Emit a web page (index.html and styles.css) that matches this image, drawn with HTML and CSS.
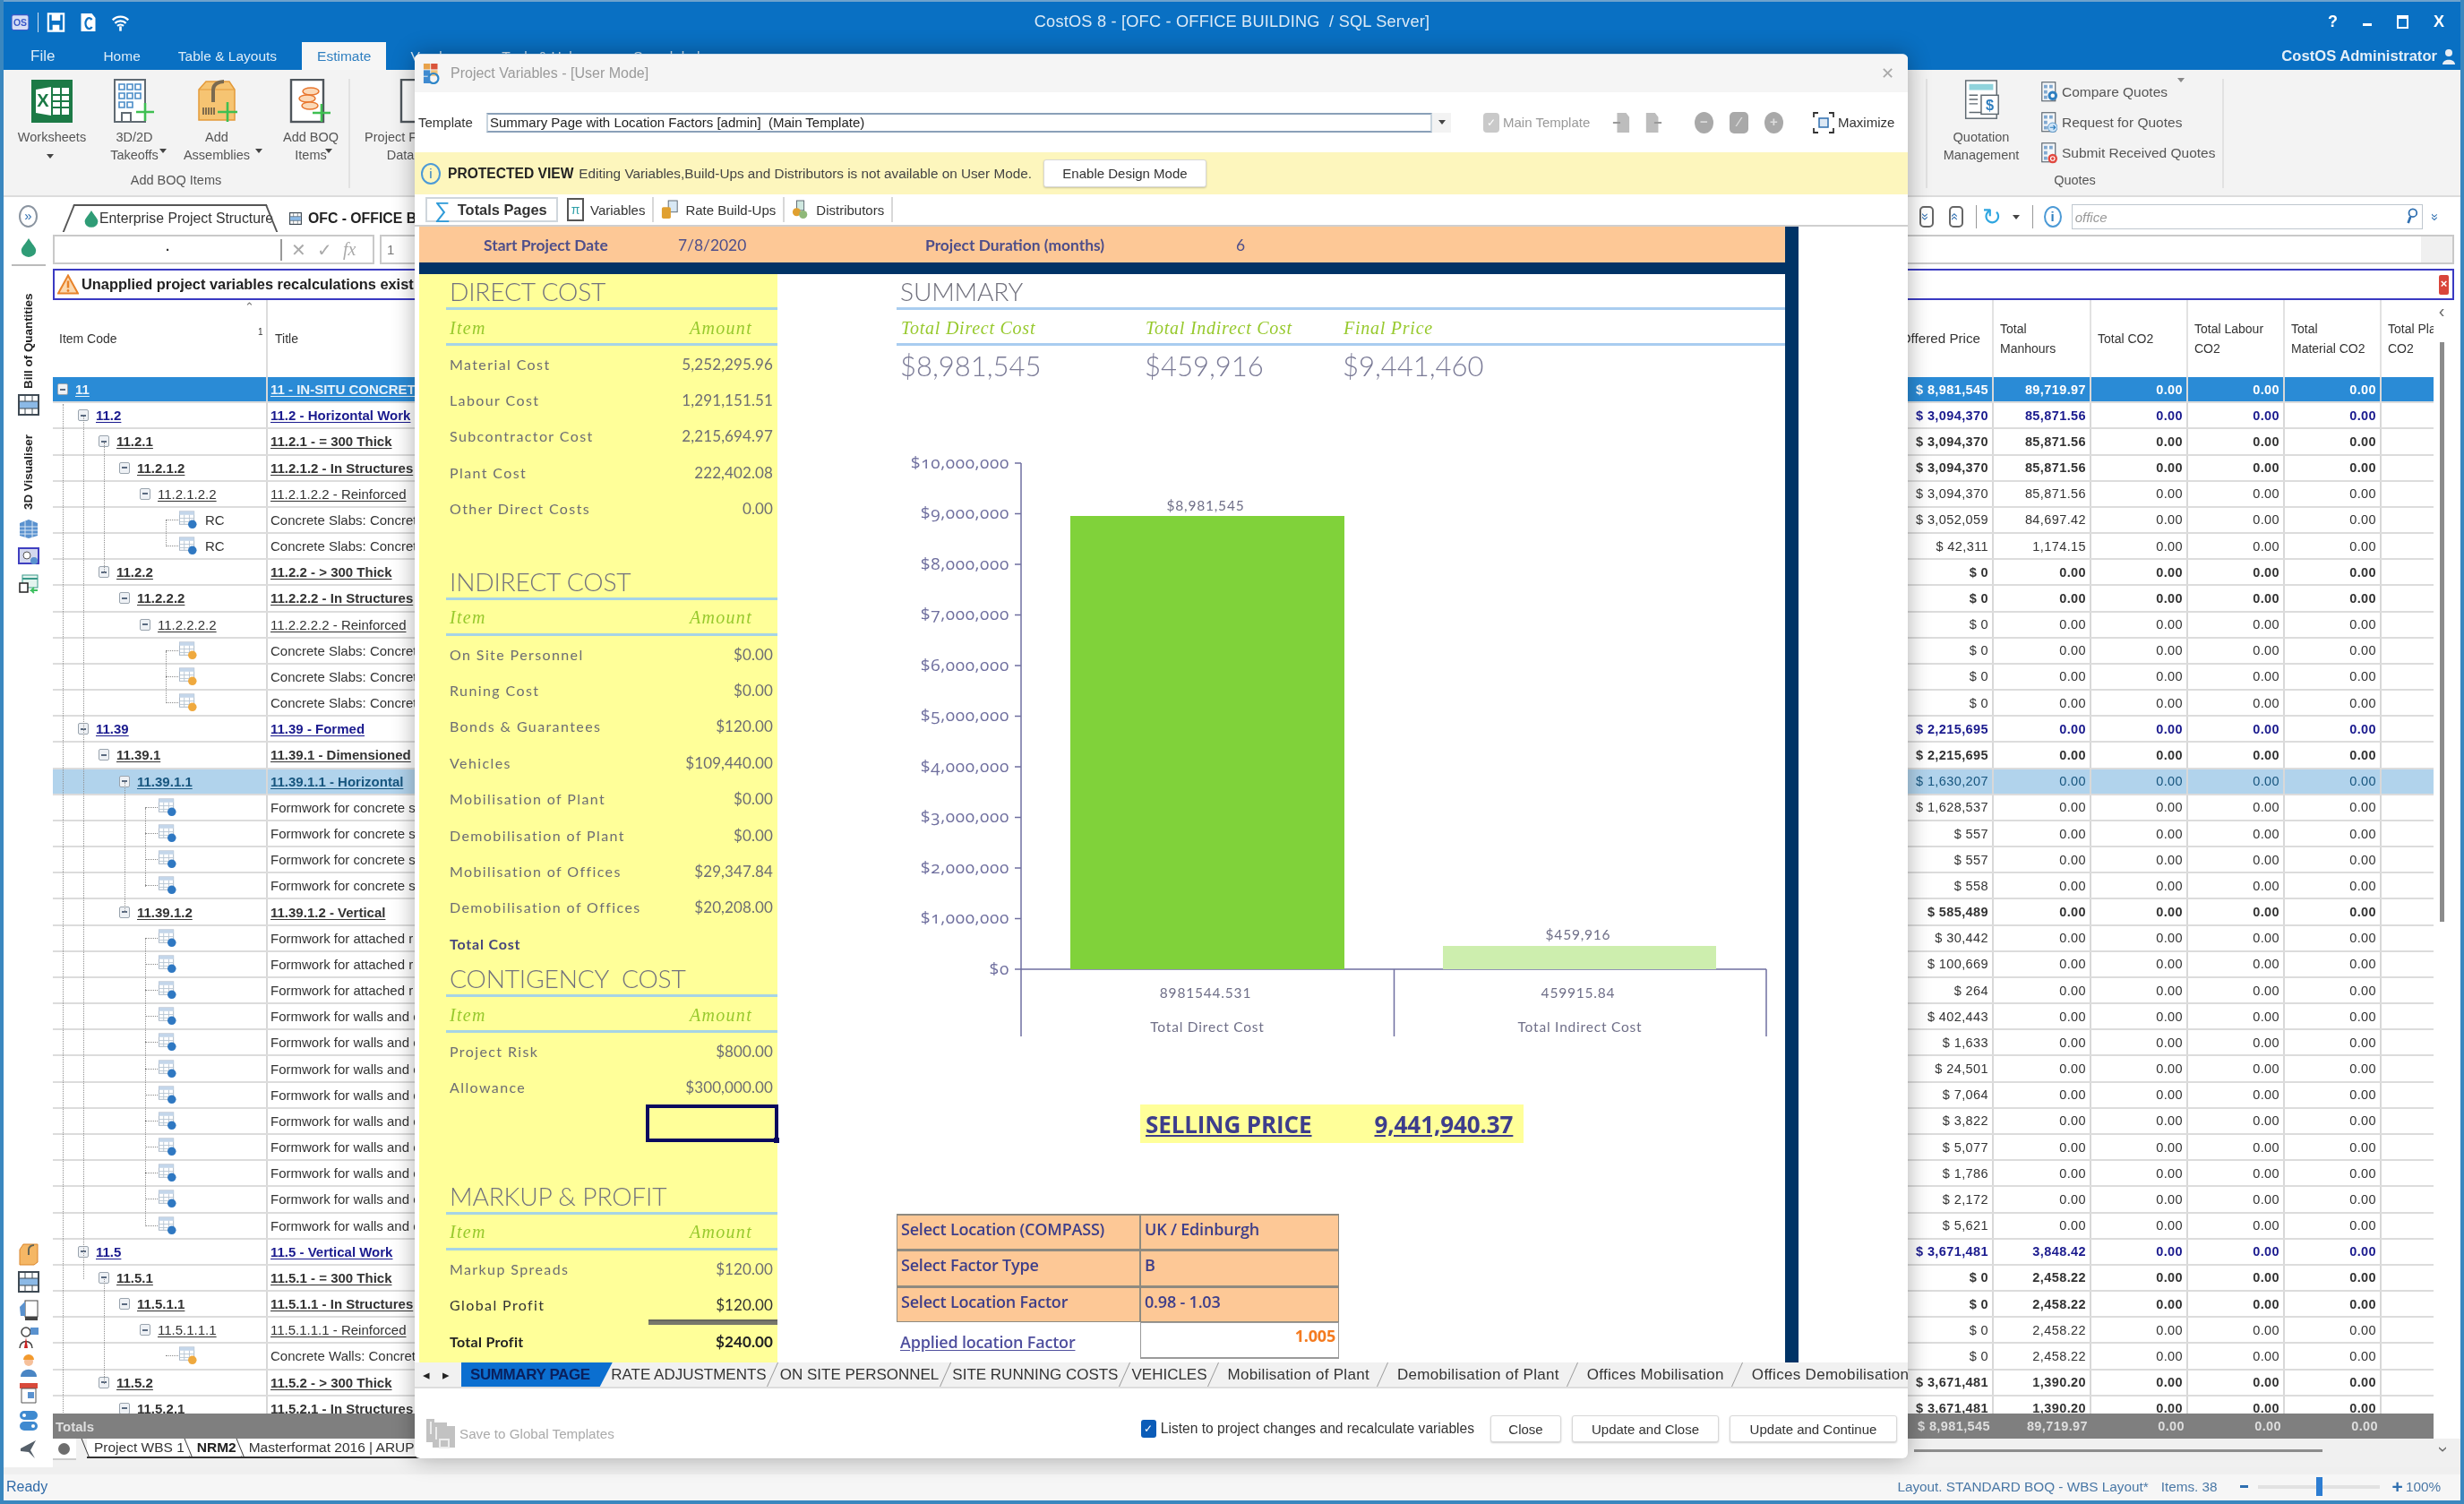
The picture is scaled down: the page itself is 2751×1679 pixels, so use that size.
FILE: index.html
```html
<!DOCTYPE html>
<html lang="en">
<head>
<meta charset="utf-8">
<title>CostOS 8 - Project Variables</title>
<link rel="stylesheet" href="styles.css">
</head>
<body>
<svg class="defs" width="0" height="0">
  <symbol id="lb" viewBox="0 0 22 22"><rect x="1" y="1" width="17" height="15" fill="#fff" stroke="#a8b6c6"/><rect x="1" y="1" width="17" height="4" fill="#c4d6ea"/><path d="M1 9h17M1 13h17M6.5 5v11M12.5 5v11" stroke="#b8c6d4"/><circle cx="16" cy="16" r="5" fill="#2f78c2"/></symbol>
  <symbol id="lo" viewBox="0 0 22 22"><rect x="1" y="1" width="17" height="15" fill="#fff" stroke="#a8b6c6"/><rect x="1" y="1" width="17" height="4" fill="#c4d6ea"/><path d="M1 9h17M1 13h17M6.5 5v11M12.5 5v11" stroke="#b8c6d4"/><circle cx="16" cy="16" r="5" fill="#efa93e"/></symbol>
  <symbol id="table" viewBox="0 0 24 24"><rect x="1" y="1" width="22" height="22" fill="#fff" stroke="#3f4a54" stroke-width="2"/><rect x="2" y="8" width="20" height="8" fill="#8bb9e6"/><path d="M2 8h20M2 16h20M8 2v6M16 2v6M8 16v6M16 16v6" stroke="#3f4a54"/></symbol>
  <symbol id="qdoc" viewBox="0 0 24 32"><rect x="1" y="1" width="20" height="28" fill="#f4f6f8" stroke="#56616b" stroke-width="1.5"/><rect x="4" y="5" width="5" height="5" fill="#7fa8d0"/><rect x="12" y="5" width="5" height="5" fill="#7fa8d0"/><rect x="4" y="13" width="5" height="5" fill="#7fa8d0"/><rect x="4" y="21" width="5" height="5" fill="#7fa8d0"/></symbol>
</svg>

<div class="app">
  <header class="titlebar">
    <div class="qat">
      <svg class="qi" viewBox="0 0 20 20"><rect x="1" y="2" width="18" height="16" rx="2" fill="#d6def5" stroke="#3a58c9"/><text x="10" y="14" class="qi-t">OS</text></svg>
      <span class="qsep"></span>
      <svg class="qi qi-w" viewBox="0 0 22 24"><path d="M2 2h18v20H2z" fill="none" stroke="#fff" stroke-width="2.4"/><path d="M6 2h10v8H6zM7 15h8v7H7z" fill="#fff"/></svg>
      <svg class="qi" viewBox="0 0 20 24"><path d="M2 2h12l4 5v15H2z" fill="#fff"/><path d="M14 9a4 6 0 1 0 .1 8" fill="none" stroke="#0970c3" stroke-width="2.4"/></svg>
      <svg class="qi qi-w" viewBox="0 0 24 22"><path d="M2 8a14 14 0 0 1 20 0M5 12a10 10 0 0 1 14 0M8 15.500a6 6 0 0 1 8 0" fill="none" stroke="#fff" stroke-width="2.6"/><path d="M12 16v6" stroke="#fff" stroke-width="3"/></svg>
    </div>
    <div class="wintitle">CostOS 8 - [OFC - OFFICE BUILDING &nbsp;/ SQL Server]</div>
    <div class="winbtns"><span class="wb-q">?</span><span class="wb-min"></span><span class="wb-max"></span><span class="wb-x">X</span></div>
  </header>

  <nav class="menutabs">
    <span class="mt mt-file">File</span>
    <span class="mt mt-home">Home</span>
    <span class="mt mt-table">Table &amp; Layouts</span>
    <span class="mt mt-est">Estimate</span>
    <span class="mt mt-vend">Vendors</span>
    <span class="mt mt-tool">Tools &amp; Help</span>
    <span class="mt mt-search">Search help</span>
    <span class="mt-user">CostOS Administrator<svg class="usr" viewBox="0 0 14 18"><circle cx="7" cy="5" r="4" fill="#e8eef4"/><path d="M0 18c0-7 14-7 14 0z" fill="#e8eef4"/></svg></span>
  </nav>

  <section class="ribbon">
    <div class="rgroup rgroup-boq">
      <div class="rbtns">
        <div class="rbtn rb-ws">
          <svg class="ricon" viewBox="0 0 48 50"><rect x="1" y="1" width="46" height="48" fill="#1c7a46"/><rect x="25" y="10" width="18" height="30" fill="#fff"/><path d="M25 18h18M25 25h18M25 32h18M34 10v30" stroke="#1c7a46" stroke-width="2"/><path d="M6 12l17-3v32l-17-3z" fill="#fff"/><text x="14" y="31" class="xl">X</text></svg>
          <span class="rlbl">Worksheets</span><i class="caret c-ws"></i>
        </div>
        <div class="rbtn rb-td">
          <svg class="ricon" viewBox="0 0 48 50"><rect x="2" y="1" width="34" height="47" fill="#fff" stroke="#606a72" stroke-width="2"/><path d="M7 6h6v6H7zM16 6h6v6h-6zM25 6h6v6h-6zM7 16h6v6H7zM16 16h6v6h-6zM25 16h6v6h-6zM7 26h6v6H7zM16 26h6v6h-6z" fill="none" stroke="#4a8cc8" stroke-width="1.600"/><path d="M10 47v-9h10v9" fill="none" stroke="#606a72" stroke-width="2"/><path d="M36 27v20M26 37h20" stroke="#3fbf52" stroke-width="2.600"/></svg>
          <span class="rlbl">3D/2D<br>Takeoffs</span><i class="caret c-td"></i>
        </div>
        <div class="rbtn rb-as">
          <svg class="ricon" viewBox="0 0 48 50"><path d="M4 12l8-9h26l6 9v34H4z" fill="#f6c472" stroke="#e39a3a" stroke-width="1.500"/><path d="M4 12h40" stroke="#e39a3a"/><path d="M20 26V12c0-6 6-9 12-9" fill="none" stroke="#7a6a50" stroke-width="4"/><path d="M9 32v8M12 32v8M15 32v8M18 32v8M21 32v8" stroke="#5c5040" stroke-width="1.500"/><path d="M36 26v22M25 37h22" stroke="#3fbf52" stroke-width="2.600"/></svg>
          <span class="rlbl">Add<br>Assemblies</span><i class="caret c-as"></i>
        </div>
        <div class="rbtn rb-bq">
          <svg class="ricon" viewBox="0 0 48 50"><rect x="2" y="1" width="36" height="47" fill="#fff" stroke="#4f565c" stroke-width="2.400"/><ellipse cx="24" cy="14" rx="9" ry="4" fill="#fbd9b8" stroke="#e8762e" stroke-width="1.500"/><ellipse cx="20" cy="22" rx="9" ry="4" fill="#fbd9b8" stroke="#e8762e" stroke-width="1.500"/><ellipse cx="23" cy="30" rx="9" ry="4" fill="#fbd9b8" stroke="#e8762e" stroke-width="1.500"/><path d="M36 28v20M26 38h20" stroke="#3fbf52" stroke-width="2.600"/></svg>
          <span class="rlbl">Add BOQ<br>Items</span><i class="caret c-bq"></i>
        </div>
      </div>
      <div class="rgname">Add BOQ Items</div>
    </div>
    <div class="rgroup rgroup-data">
      <div class="rbtn rb-pd">
        <svg class="ricon" viewBox="0 0 48 50"><rect x="2" y="1" width="36" height="47" fill="#fff" stroke="#4f565c" stroke-width="2.400"/></svg>
        <span class="rlbl">Project Files<br>Data</span>
      </div>
    </div>
    <div class="rgroup rgroup-q">
      <div class="rbtns">
        <div class="rbtn rb-qm">
          <svg class="ricon" viewBox="0 0 50 50"><rect x="8" y="1" width="36" height="44" fill="#fff" stroke="#5d6870" stroke-width="1.500"/><rect x="12" y="5" width="28" height="7" fill="#8fd3dc"/><path d="M12 18h10M12 23h10M12 28h10M12 38h18" stroke="#5d6870" stroke-width="1.500"/><rect x="26" y="18" width="20" height="22" fill="#fff" stroke="#5d6870" stroke-width="1.500"/><text x="36" y="35" class="dollar">$</text></svg>
          <span class="rlbl">Quotation<br>Management</span>
        </div>
        <div class="qlist">
          <div class="qitem"><svg class="qmini" viewBox="0 0 24 32"><use href="#qdoc"/><circle cx="17" cy="21" r="7" fill="#2f7fc0"/><circle cx="17" cy="21" r="3" fill="#fff"/></svg>Compare Quotes<i class="caret c-cq"></i></div>
          <div class="qitem"><svg class="qmini" viewBox="0 0 24 32"><use href="#qdoc"/><circle cx="17" cy="23" r="7" fill="#cfe4f6" stroke="#2f7fc0"/><path d="M13 23h8m-3-3l3 3-3 3" fill="none" stroke="#2f7fc0" stroke-width="1.500"/></svg>Request for Quotes</div>
          <div class="qitem"><svg class="qmini" viewBox="0 0 24 32"><use href="#qdoc"/><circle cx="17" cy="24" r="7" fill="#e2483f"/><circle cx="17" cy="24" r="3" fill="none" stroke="#fff" stroke-width="1.500"/></svg>Submit Received Quotes</div>
        </div>
      </div>
      <div class="rgname">Quotes</div>
    </div>
  </section>

  <div class="work">
    <aside class="sidebar">
      <span class="sb-circle">»</span>
      <svg class="sb-drop" viewBox="0 0 22 24"><path d="M11 1c4 7 9 11 9 15a9 8 0 0 1-18 0c0-4 5-8 9-15z" fill="#2f9c76"/></svg>
      <span class="sb-rule"></span>
      <span class="vtext vt-boq">Bill of Quantities</span>
      <svg class="sb-ic sb-tb"><use href="#table"/></svg>
      <span class="vtext vt-3d">3D Visualiser</span>
      <svg class="sb-ic sb-bld" viewBox="0 0 24 24"><path d="M2 6l10-4 10 4v14l-10 3-10-3z" fill="#5a92cf"/><path d="M2 10h20M2 14h20M2 18h20M8 4v18M16 4v18" stroke="#d8e6f4"/></svg>
      <svg class="sb-ic" viewBox="0 0 24 24"><rect x="1" y="3" width="22" height="17" fill="#d3d8ee" stroke="#3f3fc0" stroke-width="2"/><circle cx="10" cy="11" r="4" fill="#fff" stroke="#555"/><circle cx="18" cy="17" r="4" fill="#5a92cf"/></svg>
      <svg class="sb-ic" viewBox="0 0 24 24"><rect x="5" y="2" width="17" height="14" fill="#e3f4ee" stroke="#3a9a8a"/><path d="M5 6h17" stroke="#3a9a8a" stroke-width="2"/><path d="M2 11h9v10H2z" fill="#fff" stroke="#222" stroke-width="1.500"/><path d="M22 19h-7l3-3m-3 3l3 3" fill="none" stroke="#3ec060" stroke-width="1.800"/></svg>
      <span class="sb-grow"></span>
      <svg class="sb-ic" viewBox="0 0 24 26"><path d="M2 8l4-6h16v20l-4 3H2z" fill="#f5b765" stroke="#d9842b"/><path d="M12 14V8c0-3 3-5 6-5" fill="none" stroke="#665" stroke-width="2"/></svg>
      <svg class="sb-ic"><use href="#table"/></svg>
      <svg class="sb-ic" viewBox="0 0 24 26"><rect x="8" y="3" width="14" height="18" fill="#fff" stroke="#444"/><path d="M2 10l6-6v16H3z" fill="#5a92cf"/><rect x="8" y="21" width="14" height="4" fill="#444"/></svg>
      <svg class="sb-ic" viewBox="0 0 24 26"><circle cx="9" cy="7" r="5" fill="#fff" stroke="#444" stroke-width="1.500"/><path d="M2 25c0-10 14-10 14 0" fill="#fff" stroke="#444" stroke-width="1.500"/><path d="M9 13l-2 12h4z" fill="#c22"/><rect x="14" y="2" width="9" height="8" fill="#5a92cf"/></svg>
      <svg class="sb-ic" viewBox="0 0 24 26"><circle cx="12" cy="9" r="5" fill="#f6c09a"/><path d="M6 7a6 6 0 0 1 12 0z" fill="#f29a2e"/><path d="M3 26c0-11 18-11 18 0z" fill="#4a86c4"/></svg>
      <svg class="sb-ic" viewBox="0 0 24 26"><path d="M2 2h20v6H2z" fill="#d9493a"/><path d="M4 8h16v16H4z" fill="#fff" stroke="#555"/><rect x="11" y="12" width="7" height="7" fill="#5a92cf"/></svg>
      <svg class="sb-ic" viewBox="0 0 24 26"><rect x="2" y="2" width="20" height="10" rx="5" fill="#3f8ad0"/><rect x="2" y="14" width="20" height="10" rx="5" fill="#3f8ad0"/><circle cx="7" cy="7" r="2" fill="#fff"/><circle cx="17" cy="19" r="2" fill="#fff"/></svg>
      <svg class="sb-ic" viewBox="0 0 24 26"><path d="M3 13l17-9-6 11 5 9-7-7-9-1z" fill="#56606a"/></svg>
    </aside>

    <main class="doc">
      <div class="doctabs">
        <span class="dt dt-eps"><svg class="dt-d" viewBox="0 0 22 24"><path d="M11 1c4 7 9 11 9 15a9 8 0 0 1-18 0c0-4 5-8 9-15z" fill="#2f9c76"/></svg>Enterprise Project Structure</span>
        <span class="dt dt-ofc"><svg class="dt-t"><use href="#table"/></svg>OFC - OFFICE BUILDING</span>
        <div class="doctools">
          <span class="dtool"><i>»</i></span><span class="dtool dtool-2"><i>«</i></span><span class="dsep"></span>
          <span class="drefresh">↻</span><i class="caret c-ref"></i><span class="dsep dsep-2"></span>
          <span class="dinfo">i</span>
          <span class="dsearch">office<svg class="dmag" viewBox="0 0 16 24"><circle cx="9" cy="7" r="5" fill="none" stroke="#2f6fb0" stroke-width="2"/><path d="M6 12l-3 8" stroke="#2f6fb0" stroke-width="3"/></svg></span>
          <span class="dchev">»</span>
        </div>
      </div>
      <div class="formula">
        <div class="f-input"><span class="f-dot">.</span><span class="f-btns"><span class="f-x">✕</span><span class="f-c">✓</span><span class="f-fx">fx</span></span></div>
        <div class="f-cell">1</div>
      </div>
      <div class="warn">
        <svg class="warn-ic" viewBox="0 0 24 22"><path d="M12 1l11 20H1z" fill="#fbd9b0" stroke="#e8832a" stroke-width="2"/><path d="M12 7v8" stroke="#e8832a" stroke-width="2.500"/><circle cx="12" cy="18" r="1.400" fill="#e8832a"/></svg>
        <b>Unapplied project variables recalculations exist</b>
        <span class="warn-x">×</span>
      </div>
      <div class="gridwrap">
        <div class="grid">
          <div class="ghead">
            <div class="h-code">Item Code<span class="h-up">⌃</span><span class="h-n">1</span></div>
            <div class="h-ttl">Title</div>
            <div class="h h1">Offered Price</div>
            <div class="h h2">Total<br>Manhours</div>
            <div class="h h3">Total CO2</div>
            <div class="h h3">Total Labour<br>CO2</div>
            <div class="h h3">Total<br>Material CO2</div>
            <div class="h h6">Total Plant<br>CO2</div>
          </div>
          <div class="rows">
            <div class="row top"><div class="code l0"><i class="exp"></i><u>11</u></div><div class="ttl"><u>11 - IN-SITU CONCRETE</u></div><div class="v v1">$ 8,981,545</div><div class="v v2">89,719.97</div><div class="v">0.00</div><div class="v">0.00</div><div class="v">0.00</div><div class="v6"></div></div>
            <div class="row nv"><div class="code l1"><i class="exp"></i><u>11.2</u></div><div class="ttl"><u>11.2 - Horizontal Work</u></div><div class="v v1">$ 3,094,370</div><div class="v v2">85,871.56</div><div class="v">0.00</div><div class="v">0.00</div><div class="v">0.00</div><div class="v6"></div></div>
            <div class="row b"><div class="code l2"><i class="exp"></i><u>11.2.1</u></div><div class="ttl"><u>11.2.1 - = 300 Thick</u></div><div class="v v1">$ 3,094,370</div><div class="v v2">85,871.56</div><div class="v">0.00</div><div class="v">0.00</div><div class="v">0.00</div><div class="v6"></div></div>
            <div class="row b"><div class="code l3"><i class="exp"></i><u>11.2.1.2</u></div><div class="ttl"><u>11.2.1.2 - In Structures</u></div><div class="v v1">$ 3,094,370</div><div class="v v2">85,871.56</div><div class="v">0.00</div><div class="v">0.00</div><div class="v">0.00</div><div class="v6"></div></div>
            <div class="row"><div class="code l4"><i class="exp"></i><u>11.2.1.2.2</u></div><div class="ttl"><u>11.2.1.2.2 - Reinforced</u></div><div class="v v1">$ 3,094,370</div><div class="v v2">85,871.56</div><div class="v">0.00</div><div class="v">0.00</div><div class="v">0.00</div><div class="v6"></div></div>
            <div class="row"><div class="code leaf p5"><svg class="li"><use href="#lb"/></svg>RC</div><div class="ttl">Concrete Slabs: Concrete</div><div class="v v1">$ 3,052,059</div><div class="v v2">84,697.42</div><div class="v">0.00</div><div class="v">0.00</div><div class="v">0.00</div><div class="v6"></div></div>
            <div class="row"><div class="code leaf p5"><svg class="li"><use href="#lb"/></svg>RC</div><div class="ttl">Concrete Slabs: Concrete</div><div class="v v1">$ 42,311</div><div class="v v2">1,174.15</div><div class="v">0.00</div><div class="v">0.00</div><div class="v">0.00</div><div class="v6"></div></div>
            <div class="row b"><div class="code l2"><i class="exp"></i><u>11.2.2</u></div><div class="ttl"><u>11.2.2 - &gt; 300 Thick</u></div><div class="v v1">$ 0</div><div class="v v2">0.00</div><div class="v">0.00</div><div class="v">0.00</div><div class="v">0.00</div><div class="v6"></div></div>
            <div class="row b"><div class="code l3"><i class="exp"></i><u>11.2.2.2</u></div><div class="ttl"><u>11.2.2.2 - In Structures</u></div><div class="v v1">$ 0</div><div class="v v2">0.00</div><div class="v">0.00</div><div class="v">0.00</div><div class="v">0.00</div><div class="v6"></div></div>
            <div class="row"><div class="code l4"><i class="exp"></i><u>11.2.2.2.2</u></div><div class="ttl"><u>11.2.2.2.2 - Reinforced</u></div><div class="v v1">$ 0</div><div class="v v2">0.00</div><div class="v">0.00</div><div class="v">0.00</div><div class="v">0.00</div><div class="v6"></div></div>
            <div class="row"><div class="code leaf p5"><svg class="li"><use href="#lo"/></svg></div><div class="ttl">Concrete Slabs: Concrete</div><div class="v v1">$ 0</div><div class="v v2">0.00</div><div class="v">0.00</div><div class="v">0.00</div><div class="v">0.00</div><div class="v6"></div></div>
            <div class="row"><div class="code leaf p5"><svg class="li"><use href="#lo"/></svg></div><div class="ttl">Concrete Slabs: Concrete</div><div class="v v1">$ 0</div><div class="v v2">0.00</div><div class="v">0.00</div><div class="v">0.00</div><div class="v">0.00</div><div class="v6"></div></div>
            <div class="row"><div class="code leaf p5"><svg class="li"><use href="#lo"/></svg></div><div class="ttl">Concrete Slabs: Concrete</div><div class="v v1">$ 0</div><div class="v v2">0.00</div><div class="v">0.00</div><div class="v">0.00</div><div class="v">0.00</div><div class="v6"></div></div>
            <div class="row nv"><div class="code l1"><i class="exp"></i><u>11.39</u></div><div class="ttl"><u>11.39 - Formed</u></div><div class="v v1">$ 2,215,695</div><div class="v v2">0.00</div><div class="v">0.00</div><div class="v">0.00</div><div class="v">0.00</div><div class="v6"></div></div>
            <div class="row b"><div class="code l2"><i class="exp"></i><u>11.39.1</u></div><div class="ttl"><u>11.39.1 - Dimensioned</u></div><div class="v v1">$ 2,215,695</div><div class="v v2">0.00</div><div class="v">0.00</div><div class="v">0.00</div><div class="v">0.00</div><div class="v6"></div></div>
            <div class="row sel"><div class="code l3"><i class="exp"></i><u>11.39.1.1</u></div><div class="ttl"><u>11.39.1.1 - Horizontal</u></div><div class="v v1">$ 1,630,207</div><div class="v v2">0.00</div><div class="v">0.00</div><div class="v">0.00</div><div class="v">0.00</div><div class="v6"></div></div>
            <div class="row"><div class="code leaf p4"><svg class="li"><use href="#lb"/></svg></div><div class="ttl">Formwork for concrete s</div><div class="v v1">$ 1,628,537</div><div class="v v2">0.00</div><div class="v">0.00</div><div class="v">0.00</div><div class="v">0.00</div><div class="v6"></div></div>
            <div class="row"><div class="code leaf p4"><svg class="li"><use href="#lb"/></svg></div><div class="ttl">Formwork for concrete s</div><div class="v v1">$ 557</div><div class="v v2">0.00</div><div class="v">0.00</div><div class="v">0.00</div><div class="v">0.00</div><div class="v6"></div></div>
            <div class="row"><div class="code leaf p4"><svg class="li"><use href="#lb"/></svg></div><div class="ttl">Formwork for concrete s</div><div class="v v1">$ 557</div><div class="v v2">0.00</div><div class="v">0.00</div><div class="v">0.00</div><div class="v">0.00</div><div class="v6"></div></div>
            <div class="row"><div class="code leaf p4"><svg class="li"><use href="#lb"/></svg></div><div class="ttl">Formwork for concrete s</div><div class="v v1">$ 558</div><div class="v v2">0.00</div><div class="v">0.00</div><div class="v">0.00</div><div class="v">0.00</div><div class="v6"></div></div>
            <div class="row b"><div class="code l3"><i class="exp"></i><u>11.39.1.2</u></div><div class="ttl"><u>11.39.1.2 - Vertical</u></div><div class="v v1">$ 585,489</div><div class="v v2">0.00</div><div class="v">0.00</div><div class="v">0.00</div><div class="v">0.00</div><div class="v6"></div></div>
            <div class="row"><div class="code leaf p4"><svg class="li"><use href="#lb"/></svg></div><div class="ttl">Formwork for attached r</div><div class="v v1">$ 30,442</div><div class="v v2">0.00</div><div class="v">0.00</div><div class="v">0.00</div><div class="v">0.00</div><div class="v6"></div></div>
            <div class="row"><div class="code leaf p4"><svg class="li"><use href="#lb"/></svg></div><div class="ttl">Formwork for attached r</div><div class="v v1">$ 100,669</div><div class="v v2">0.00</div><div class="v">0.00</div><div class="v">0.00</div><div class="v">0.00</div><div class="v6"></div></div>
            <div class="row"><div class="code leaf p4"><svg class="li"><use href="#lb"/></svg></div><div class="ttl">Formwork for attached r</div><div class="v v1">$ 264</div><div class="v v2">0.00</div><div class="v">0.00</div><div class="v">0.00</div><div class="v">0.00</div><div class="v6"></div></div>
            <div class="row"><div class="code leaf p4"><svg class="li"><use href="#lb"/></svg></div><div class="ttl">Formwork for walls and c</div><div class="v v1">$ 402,443</div><div class="v v2">0.00</div><div class="v">0.00</div><div class="v">0.00</div><div class="v">0.00</div><div class="v6"></div></div>
            <div class="row"><div class="code leaf p4"><svg class="li"><use href="#lb"/></svg></div><div class="ttl">Formwork for walls and c</div><div class="v v1">$ 1,633</div><div class="v v2">0.00</div><div class="v">0.00</div><div class="v">0.00</div><div class="v">0.00</div><div class="v6"></div></div>
            <div class="row"><div class="code leaf p4"><svg class="li"><use href="#lb"/></svg></div><div class="ttl">Formwork for walls and c</div><div class="v v1">$ 24,501</div><div class="v v2">0.00</div><div class="v">0.00</div><div class="v">0.00</div><div class="v">0.00</div><div class="v6"></div></div>
            <div class="row"><div class="code leaf p4"><svg class="li"><use href="#lb"/></svg></div><div class="ttl">Formwork for walls and c</div><div class="v v1">$ 7,064</div><div class="v v2">0.00</div><div class="v">0.00</div><div class="v">0.00</div><div class="v">0.00</div><div class="v6"></div></div>
            <div class="row"><div class="code leaf p4"><svg class="li"><use href="#lb"/></svg></div><div class="ttl">Formwork for walls and c</div><div class="v v1">$ 3,822</div><div class="v v2">0.00</div><div class="v">0.00</div><div class="v">0.00</div><div class="v">0.00</div><div class="v6"></div></div>
            <div class="row"><div class="code leaf p4"><svg class="li"><use href="#lb"/></svg></div><div class="ttl">Formwork for walls and c</div><div class="v v1">$ 5,077</div><div class="v v2">0.00</div><div class="v">0.00</div><div class="v">0.00</div><div class="v">0.00</div><div class="v6"></div></div>
            <div class="row"><div class="code leaf p4"><svg class="li"><use href="#lb"/></svg></div><div class="ttl">Formwork for walls and c</div><div class="v v1">$ 1,786</div><div class="v v2">0.00</div><div class="v">0.00</div><div class="v">0.00</div><div class="v">0.00</div><div class="v6"></div></div>
            <div class="row"><div class="code leaf p4"><svg class="li"><use href="#lb"/></svg></div><div class="ttl">Formwork for walls and c</div><div class="v v1">$ 2,172</div><div class="v v2">0.00</div><div class="v">0.00</div><div class="v">0.00</div><div class="v">0.00</div><div class="v6"></div></div>
            <div class="row"><div class="code leaf p4"><svg class="li"><use href="#lb"/></svg></div><div class="ttl">Formwork for walls and c</div><div class="v v1">$ 5,621</div><div class="v v2">0.00</div><div class="v">0.00</div><div class="v">0.00</div><div class="v">0.00</div><div class="v6"></div></div>
            <div class="row nv"><div class="code l1"><i class="exp"></i><u>11.5</u></div><div class="ttl"><u>11.5 - Vertical Work</u></div><div class="v v1">$ 3,671,481</div><div class="v v2">3,848.42</div><div class="v">0.00</div><div class="v">0.00</div><div class="v">0.00</div><div class="v6"></div></div>
            <div class="row b"><div class="code l2"><i class="exp"></i><u>11.5.1</u></div><div class="ttl"><u>11.5.1 - = 300 Thick</u></div><div class="v v1">$ 0</div><div class="v v2">2,458.22</div><div class="v">0.00</div><div class="v">0.00</div><div class="v">0.00</div><div class="v6"></div></div>
            <div class="row b"><div class="code l3"><i class="exp"></i><u>11.5.1.1</u></div><div class="ttl"><u>11.5.1.1 - In Structures</u></div><div class="v v1">$ 0</div><div class="v v2">2,458.22</div><div class="v">0.00</div><div class="v">0.00</div><div class="v">0.00</div><div class="v6"></div></div>
            <div class="row"><div class="code l4"><i class="exp"></i><u>11.5.1.1.1</u></div><div class="ttl"><u>11.5.1.1.1 - Reinforced</u></div><div class="v v1">$ 0</div><div class="v v2">2,458.22</div><div class="v">0.00</div><div class="v">0.00</div><div class="v">0.00</div><div class="v6"></div></div>
            <div class="row"><div class="code leaf p5"><svg class="li"><use href="#lo"/></svg></div><div class="ttl">Concrete Walls: Concrete</div><div class="v v1">$ 0</div><div class="v v2">2,458.22</div><div class="v">0.00</div><div class="v">0.00</div><div class="v">0.00</div><div class="v6"></div></div>
            <div class="row b"><div class="code l2"><i class="exp"></i><u>11.5.2</u></div><div class="ttl"><u>11.5.2 - &gt; 300 Thick</u></div><div class="v v1">$ 3,671,481</div><div class="v v2">1,390.20</div><div class="v">0.00</div><div class="v">0.00</div><div class="v">0.00</div><div class="v6"></div></div>
            <div class="row b"><div class="code l3"><i class="exp"></i><u>11.5.2.1</u></div><div class="ttl"><u>11.5.2.1 - In Structures</u></div><div class="v v1">$ 3,671,481</div><div class="v v2">1,390.20</div><div class="v">0.00</div><div class="v">0.00</div><div class="v">0.00</div><div class="v6"></div></div>
            <span class="g g1"></span><span class="g g2"></span><span class="g g3"></span><span class="g g4"></span><span class="g g5"></span><span class="g g6"></span><span class="g g7"></span><span class="g g8"></span><span class="g g9"></span>
          </div>
          <div class="row totals"><div class="code">Totals</div><div class="ttl"></div><div class="v v1">$ 8,981,545</div><div class="v v2">89,719.97</div><div class="v">0.00</div><div class="v">0.00</div><div class="v">0.00</div><div class="v6"></div></div>
        </div>
        <div class="vscroll"><span class="vs-up">‹</span><span class="vs-thumb"></span></div>
      </div>
      <div class="wbsbar">
        <span class="wbs-disc"></span>
        <span class="wt wt-1">Project WBS 1</span>
        <span class="wt wt-on">NRM2</span>
        <span class="wt">Masterformat 2016 | ARUP</span>
        <span class="hscroll"></span>
        <span class="vs-down">‹</span>
      </div>
    </main>
  </div>

  <footer class="status">
    <span class="st-ready">Ready</span>
    <span class="st-layout">Layout. STANDARD BOQ - WBS Layout*</span>
    <span class="st-items">Items. 38</span>
    <span class="st-minus"></span>
    <span class="st-slider"><i></i></span>
    <span class="st-plus">+</span>
    <span class="st-pct">100%</span>
  </footer>

  <div class="modal">
    <div class="m-title">
      <svg class="m-logo" viewBox="0 0 24 26"><rect x="1" y="1" width="8" height="7" fill="#e8a24a"/><rect x="10" y="1" width="8" height="7" fill="#d9543a"/><rect x="1" y="9" width="8" height="7" fill="#3f8ad0"/><rect x="10" y="9" width="8" height="7" fill="#f1c27a"/><circle cx="13" cy="19" r="6" fill="none" stroke="#2f86c8" stroke-width="2.400"/><rect x="1" y="17" width="8" height="8" fill="#3f8ad0"/></svg>
      <span>Project Variables - [User Mode]</span>
      <span class="m-close">✕</span>
    </div>
    <div class="m-tmpl">
      <span class="t-lbl">Template</span>
      <span class="t-select">Summary Page with Location Factors [admin] &nbsp;(Main Template)</span>
      <span class="t-arrow"><i class="caret"></i></span>
      <span class="t-chk">✓</span>
      <span class="t-main">Main Template</span>
      <svg class="t-ic t-ic1" viewBox="0 0 22 26"><path d="M6 1h11l4 5v19H6z" fill="#bdbdbd"/><path d="M1 13h9" stroke="#999" stroke-width="2"/></svg>
      <svg class="t-ic" viewBox="0 0 22 26"><path d="M2 1h11l4 5v19H2z" fill="#bdbdbd"/><path d="M12 13h9" stroke="#999" stroke-width="2"/></svg>
      <span class="t-round t-r1">−</span>
      <span class="t-round t-r2">⁄</span>
      <span class="t-round">+</span>
      <svg class="t-max" viewBox="0 0 24 24"><path d="M1 6V1h5M18 1h5v5M23 18v5h-5M6 23H1v-5" fill="none" stroke="#333" stroke-width="1.800"/><rect x="7" y="7" width="10" height="10" fill="#dce8f4" stroke="#2f6fb0" stroke-width="1.500"/></svg>
      <span class="t-maxl">Maximize</span>
    </div>
    <div class="m-prot">
      <span class="p-i">i</span>
      <b class="p-b">PROTECTED VIEW</b>
      <span class="p-t">Editing Variables,Build-Ups and Distributors is not available on User Mode.</span>
      <span class="p-btn">Enable Design Mode</span>
    </div>
    <div class="m-tabs">
      <span class="mtab mtab-on"><span class="sig">∑</span>Totals Pages</span>
      <span class="mtab"><span class="pi">π</span>Variables</span>
      <span class="mtab"><svg class="mt-ic" viewBox="0 0 22 24"><rect x="9" y="1" width="11" height="14" fill="#d8e8f4" stroke="#56616b"/><rect x="1" y="9" width="11" height="14" rx="2" fill="#e0a030"/></svg>Rate Build-Ups</span>
      <span class="mtab"><svg class="mt-ic" viewBox="0 0 22 24"><rect x="6" y="1" width="9" height="12" fill="#cfe8e0" stroke="#56616b"/><circle cx="6" cy="15" r="5" fill="#e0a030"/><circle cx="14" cy="18" r="5" fill="#8fb878"/></svg>Distributors</span>
    </div>
    <div class="sheet">
      <div class="sheet-main">
        <div class="s-orange"><b>Start Project Date</b><span>7/8/2020</span><b>Project Duration (months)</b><span>6</span></div>
        <div class="s-navy"></div>
        <div class="s-body">
          <div class="ypanel">
            <h2 class="sec">DIRECT COST</h2>
            <div class="ihead"><span>Item</span><span>Amount</span></div>
            <div class="li-row"><span>Material Cost</span><span>5,252,295.96</span></div>
            <div class="li-row"><span>Labour Cost</span><span>1,291,151.51</span></div>
            <div class="li-row"><span>Subcontractor Cost</span><span>2,215,694.97</span></div>
            <div class="li-row"><span>Plant Cost</span><span>222,402.08</span></div>
            <div class="li-row"><span>Other Direct Costs</span><span>0.00</span></div>
            <h2 class="sec sec-ind">INDIRECT COST</h2>
            <div class="ihead"><span>Item</span><span>Amount</span></div>
            <div class="li-row"><span>On Site Personnel</span><span>$0.00</span></div>
            <div class="li-row"><span>Runing Cost</span><span>$0.00</span></div>
            <div class="li-row"><span>Bonds &amp; Guarantees</span><span>$120.00</span></div>
            <div class="li-row"><span>Vehicles</span><span>$109,440.00</span></div>
            <div class="li-row"><span>Mobilisation of Plant</span><span>$0.00</span></div>
            <div class="li-row"><span>Demobilisation of Plant</span><span>$0.00</span></div>
            <div class="li-row"><span>Mobilisation of Offices</span><span>$29,347.84</span></div>
            <div class="li-row"><span>Demobilisation of Offices</span><span>$20,208.00</span></div>
            <div class="li-row li-total"><span>Total Cost</span><span></span></div>
            <h2 class="sec sec-con">CONTIGENCY &nbsp;COST</h2>
            <div class="ihead"><span>Item</span><span>Amount</span></div>
            <div class="li-row"><span>Project Risk</span><span>$800.00</span></div>
            <div class="li-row"><span>Allowance</span><span>$300,000.00</span></div>
            <div class="selcell"></div>
            <h2 class="sec sec-mark">MARKUP &amp; PROFIT</h2>
            <div class="ihead"><span>Item</span><span>Amount</span></div>
            <div class="li-row"><span>Markup Spreads</span><span>$120.00</span></div>
            <div class="li-row li-dark"><span>Global Profit</span><span>$120.00</span></div>
            <div class="dbl"></div>
            <div class="li-row li-profit"><span>Total Profit</span><span>$240.00</span></div>
          </div>
          <div class="summary">
            <h2 class="sec sec-sum">SUMMARY</h2>
            <div class="s-heads"><span>Total Direct Cost</span><span>Total Indirect Cost</span><span>Final Price</span></div>
            <div class="s-vals"><span>$8,981,545</span><span>$459,916</span><span>$9,441,460</span></div>
            <svg class="chart" viewBox="0 0 992 665">
              <g class="ax">
                <path d="M139 17V657M139 582H971M971 582V657M555.500 582V657"/>
                <path d="M132 17h7M132 73.500h7M132 130h7M132 186.500h7M132 243h7M132 299.500h7M132 356h7M132 412.500h7M132 469h7M132 525.500h7M132 582h7"/>
              </g>
              <g class="tick">
                <text x="126" y="23">$10,000,000</text><text x="126" y="79">$9,000,000</text><text x="126" y="136">$8,000,000</text><text x="126" y="192">$7,000,000</text><text x="126" y="249">$6,000,000</text><text x="126" y="305">$5,000,000</text><text x="126" y="362">$4,000,000</text><text x="126" y="418">$3,000,000</text><text x="126" y="475">$2,000,000</text><text x="126" y="531">$1,000,000</text><text x="126" y="588">$0</text>
              </g>
              <rect x="194" y="76" width="306" height="506" class="bar1"/>
              <rect x="610" y="556" width="305" height="26" class="bar2"/>
              <g class="clab">
                <text x="345" y="70">$8,981,545</text><text x="761" y="549">$459,916</text>
                <text x="345" y="614">8981544.531</text><text x="761" y="614">459915.84</text>
                <text x="347" y="652">Total Direct Cost</text><text x="763" y="652">Total Indirect Cost</text>
              </g>
            </svg>
            <div class="selling"><u>SELLING PRICE</u><u>9,441,940.37</u></div>
            <div class="loc">
              <div class="lc">Select Location (COMPASS)</div><div class="lc">UK / Edinburgh</div>
              <div class="lc">Select Factor Type</div><div class="lc">B</div>
              <div class="lc">Select Location Factor</div><div class="lc">0.98 - 1.03</div>
              <div class="lc-app"><u>Applied location Factor</u></div><div class="lc-val">1.005</div>
            </div>
          </div>
        </div>
      </div>
      <div class="sheet-rail"></div>
    </div>
    <div class="sheettabs">
      <span class="st-nav">◂</span><span class="st-nav">▸</span>
      <span class="stab stab-on">SUMMARY PAGE</span>
      <span class="stab">RATE ADJUSTMENTS</span>
      <span class="stab">ON SITE PERSONNEL</span>
      <span class="stab">SITE RUNNING COSTS</span>
      <span class="stab">VEHICLES</span>
      <span class="stab stab-low">Mobilisation of Plant</span>
      <span class="stab stab-low">Demobilisation of Plant</span>
      <span class="stab stab-low">Offices Mobilisation</span>
      <span class="stab stab-low">Offices Demobilisation</span>
    </div>
    <div class="m-foot">
      <svg class="f-save" viewBox="0 0 34 34"><path d="M1 1h9v4h14v4h9v24H8v-6H1z" fill="#c2c2c2"/><path d="M6 4v14M12 10v14M16 24h10v9H16z" fill="none" stroke="#ececec" stroke-width="2"/></svg>
      <span class="f-savel">Save to Global Templates</span>
      <span class="f-chk">✓</span>
      <span class="f-lis">Listen to project changes and recalculate variables</span>
      <span class="f-btn f-b1">Close</span>
      <span class="f-btn f-b2">Update and Close</span>
      <span class="f-btn f-b3">Update and Continue</span>
    </div>
  </div>
</div>
</body>
</html>
```

FILE: styles.css
```css
* { box-sizing: border-box; }
html, body { margin: 0; padding: 0; background: #fff; }
.defs { position: absolute; }
.app {
  position: relative; width: 2751px; height: 1679px; overflow: hidden;
  display: flex; flex-direction: column;
  border-left: 4px solid #3a87bf; border-right: 4px solid #3a87bf; border-bottom: 4px solid #3a87bf;
  font-family: "Liberation Sans", Arial, sans-serif; font-size: 15px; color: #333;
  background: #f6f6f6; filter: blur(.45px);
}
u { text-underline-offset: 2px; }

/* title bar */
.titlebar { height: 47px; background: #0970c3; display: grid; grid-template-columns: 1fr auto 1fr; align-items: center; color: #fff; border-top: 2px solid #6fa3cd; }
.qat { display: flex; align-items: center; padding-left: 8px; gap: 15px; }
.qi { width: 21px; height: 24px; }
.qi-t { font: bold 10px "Liberation Sans", sans-serif; fill: #3a58c9; text-anchor: middle; }
.qsep { width: 1px; height: 22px; background: #cfe0f0; margin: 0 -6px; }
.wintitle { font-size: 18.200px; color: #dceaf6; letter-spacing: .2px; }
.winbtns { display: flex; justify-content: flex-end; align-items: center; padding-right: 18px; gap: 28px; font-weight: bold; font-size: 18px; }
.wb-min { width: 10px; height: 3px; background: #fff; margin-top: 6px; }
.wb-max { width: 13px; height: 15px; border: 2px solid #fff; border-top-width: 4px; }

.menutabs { height: 31px; background: #0970c3; display: flex; align-items: stretch; color: #dcecf8; font-size: 15.500px; position: relative; }
.mt { display: flex; align-items: center; margin-right: 42px; }
.mt-file { margin-left: 30px; margin-right: 54px; font-size: 17px; }
.mt-table { margin-right: 28px; }
.mt-est { background: #f6f6f6; color: #2f7fc0; padding: 0 17px; margin-right: 27px; }
.mt-vend { margin-right: 45px; }
.mt-tool { margin-right: 60px; }
.mt-user { margin-left: auto; margin-right: 4px; display: flex; align-items: center; gap: 6px; font-weight: bold; color: #e4eff8; padding-right: 2px; font-size: 16.600px; }
.usr { width: 14px; height: 18px; }

/* ribbon */
.ribbon { height: 142px; background: #f3f3f3; border-bottom: 2px solid #dcdcdc; display: flex; color: #555; font-size: 14.500px; }
.rgroup { display: flex; flex-direction: column; position: relative; }
.rgroup-boq { width: 387px; border-right: 2px solid #e2e2e2; margin: 10px 0 8px; }
.rgroup-data { width: 100px; margin-top: 10px; }
.rgroup-q { margin-left: auto; margin-right: 264px; width: 333px; border-left: 2px solid #e2e2e2; border-right: 2px solid #e2e2e2; margin-top: 10px; margin-bottom: 8px; }
.rbtns { display: flex; flex: 1; }
.rbtn { position: relative; display: flex; flex-direction: column; align-items: center; text-align: center; line-height: 20px; }
.ricon { width: 48px; height: 50px; margin-bottom: 5px; }
.xl { font: bold 20px "Liberation Sans", sans-serif; fill: #1c7a46; text-anchor: middle; }
.dollar { font: bold 17px "Liberation Sans", sans-serif; fill: #2f7fc0; text-anchor: middle; }
.rb-ws { width: 92px; margin-left: 8px; }
.rb-td { width: 92px; }
.rb-as { width: 92px; }
.rb-bq { width: 80px; margin-left: 19px; }
.rb-pd { width: 100px; padding-left: 12px; }
.rb-pd .ricon { align-self: flex-start; margin-left: 43px; }
.rb-qm { width: 120px; margin-left: 0; }
.rb-qm .ricon { margin-left: -2px; }
.rgname { text-align: center; line-height: 18px; }
.caret { display: inline-block; border-left: 4px solid transparent; border-right: 4px solid transparent; border-top: 5px solid #444; }
.c-ws { position: absolute; left: 40px; top: 84px; }
.c-td { position: absolute; left: 74px; top: 78px; }
.c-as { position: absolute; left: 89px; top: 78px; }
.c-bq { position: absolute; left: 56px; top: 78px; }
.qlist { display: flex; flex-direction: column; gap: 11px; padding-top: 3px; padding-left: 7px; font-size: 15.500px; }
.qitem { display: flex; align-items: center; gap: 5px; height: 23px; white-space: nowrap; position: relative; }
.qmini { width: 18px; height: 24px; }
.c-cq { position: absolute; left: 152px; top: -4px; border-top-color: #888; }

/* work area */
.work { height: 1418px; display: flex; background: #fff; }
.sidebar { width: 55px; display: flex; flex-direction: column; align-items: center; padding: 9px 0 8px; flex: none; }
.sb-circle { width: 21px; height: 25px; border: 2px solid #8a94a0; border-radius: 50%; text-align: center; color: #2f6fb0; line-height: 19px; font-size: 15px; }
.sb-drop { width: 20px; height: 24px; margin-top: 10px; }
.sb-rule { width: 38px; height: 2px; background: #bbb; margin-top: 7px; }
.vtext { writing-mode: vertical-rl; transform: rotate(180deg); font-weight: bold; font-size: 13.400px; color: #222; white-space: nowrap; }
.vt-boq { margin-top: 37px; height: 100px; }
.sb-ic { width: 24px; height: 26px; flex: none; }
.sb-tb { margin-top: 5px; }
.vt-3d { margin-top: 22px; height: 82px; }
.sb-bld { margin-top: 8px; }
.sidebar .sb-ic + .sb-ic { margin-top: 5px; }
.sb-grow { flex: 1; }

.doc { flex: 1; min-width: 0; display: flex; flex-direction: column; padding-top: 8px; }
.doctabs { height: 31px; display: flex; align-items: stretch; position: relative; }
.dt { display: flex; align-items: center; white-space: nowrap; font-size: 15.800px; position: relative; }
.dt-eps { margin-left: 11px; padding-left: 23px; width: 240px; gap: 0; }
.dt-eps::before, .dt-eps::after { content: ""; position: absolute; top: 0; bottom: 0; width: 60%; border-top: 2px solid #555; }
.dt-eps::before { left: 6px; border-left: 2px solid #555; transform: skewX(-22deg); }
.dt-eps::after { right: 6px; border-right: 2px solid #555; transform: skewX(22deg); }
.dt-ofc { font-weight: bold; padding-left: 13px; gap: 7px; width: 220px; color: #222; }
.dt-d { width: 18px; height: 20px; }
.dt-t { width: 20px; height: 22px; }
.doctools { position: absolute; right: 0; top: 0; bottom: 0; display: flex; align-items: center; padding-right: 24px; margin-top: -3px; }
.dtool { width: 16px; height: 24px; border: 2px solid #666; border-radius: 5px; display: flex; align-items: center; justify-content: center; color: #2f6fb0; margin-right: 17px; }
.dtool i { transform: rotate(90deg); font-style: normal; line-height: 12px; }
.dtool-2 { margin-right: 14px; }
.dsep { width: 1px; height: 26px; background: #999; margin-right: 6px; }
.dsep-2 { margin-right: 12px; }
.drefresh { font-size: 26px; width: 25px; color: #2fa6e0; line-height: 26px; }
.c-ref { margin: 0 14px 0 9px; }
.dinfo { width: 20px; height: 24px; border: 2px solid #4c9ad6; border-radius: 50%; text-align: center; color: #2f7fc0; line-height: 20px; font-weight: bold; margin-right: 11px; }
.dsearch { width: 392px; height: 28px; border: 1px solid #bfc7cf; background: #fff; font-style: italic; color: #999; padding: 5px 3px; position: relative; }
.dmag { position: absolute; right: 4px; top: 2px; width: 14px; height: 22px; }
.dchev { transform: rotate(90deg); color: #2f6fb0; margin-left: 10px; }

.formula { height: 33px; margin-top: 3px; display: flex; gap: 6px; padding-right: 7px; }
.f-input { width: 359px; border: 2px solid #c9c9c9; display: flex; align-items: center; background: #fff; }
.f-dot { width: 252px; text-align: center; font-weight: bold; padding-bottom: 8px; }
.f-btns { border-left: 2px solid #999; height: 24px; display: flex; gap: 12px; align-items: center; padding-left: 10px; color: #aaa; font-size: 20px; }
.f-fx { font-family: "Liberation Serif", serif; font-style: italic; }
.f-cell { flex: 1; border: 2px solid #c9c9c9; padding: 6px 6px; background: linear-gradient(90deg, #fff 98.500%, #f0f0f0 98.500%); color: #777; }

.warn { height: 35px; margin-top: 5px; margin-right: 7px; border: 2px solid #3a3ac2; display: flex; align-items: center; padding-left: 3px; gap: 3px; color: #222; font-size: 16.400px; }
.warn-ic { width: 24px; height: 23px; }
.warn-x { margin-left: auto; width: 11px; height: 22px; background: #d9453a; color: #fff; text-align: center; line-height: 20px; font-weight: bold; margin-right: 4px; border-radius: 2px; font-size: 13px; }

.gridwrap { display: flex; height: 1271px; position: relative; }
.grid { width: 2658px; flex: none; display: flex; flex-direction: column; }
.ghead { height: 86px; display: flex; font-size: 14px; color: #333; background: #fff; }
.h-code { width: 240px; border-right: 2px solid #ddd; padding-left: 7px; display: flex; align-items: center; position: relative; }
.h-up { position: absolute; left: 214px; top: 0; color: #777; font-size: 13px; }
.h-n { position: absolute; left: 229px; top: 30px; font-size: 10px; }
.h-ttl { flex: 1; padding-left: 8px; display: flex; align-items: center; }
.h { width: 108px; border-left: 2px solid #e2e2e2; padding-left: 7px; display: flex; align-items: center; line-height: 22px; }
.h1 { width: 120px; white-space: nowrap; border-left: 0; justify-content: flex-end; padding-right: 13px; font-size: 15.200px; }
.h2 { width: 109px; }
.h6 { width: 60px; white-space: nowrap; overflow: hidden; }

.rows { flex: 1; min-height: 0; overflow: hidden; position: relative; display: grid; grid-auto-rows: 29.18px; align-content: start; }
.row { display: flex; align-items: stretch; border-bottom: 2px solid #dcdcdc; background: #fff; white-space: nowrap; }
.row > div { display: flex; align-items: center; }
.code { width: 240px; border-right: 2px solid #d8d8d8; flex: none; gap: 8px; }
.ttl { flex: 1; min-width: 0; padding-left: 3px; overflow: hidden; }
.v { width: 108px; flex: none; justify-content: flex-end; padding-right: 4px; border-right: 2px solid #d8d8d8; letter-spacing: .4px; }
.row > .v1 { width: 120px; }
.row > .v2 { width: 109px; }
.v6 { width: 58px; flex: none; }
.row > .v { font-size: 14.500px; }
.l0 { padding-left: 5px; }
.l1 { padding-left: 28px; }
.l2 { padding-left: 51px; }
.l3 { padding-left: 74px; }
.l4 { padding-left: 97px; }
.p4 { padding-left: 103px; }
.p5 { padding-left: 126px; }
.exp { width: 12px; height: 13px; border: 1.500px solid #9aa4ae; background: #eef1f5; border-radius: 2px; display: flex; align-items: center; justify-content: center; flex: none; }
.exp::after { content: ""; width: 6px; height: 2px; background: #5a6a80; }
.leaf { gap: 0; }
.leaf::before { content: ""; width: 14px; height: 0; border-top: 1px dotted #888; flex: none; }
.li { width: 22px; height: 21px; margin-right: 8px; flex: none; }
.row.b, .row.nv, .row.top { font-weight: bold; }
.row.nv { color: #1a1a8e; }
.row.top { background: #2a8bd6; color: #fff; }
.row.top .ttl, .row.top .code { color: #e8f3fb; }
.row.sel { background: #b1d3ec; color: #17557e; font-weight: bold; }
.row.sel .v { font-weight: normal; }
.row.totals { flex: none; height: 28px; background: #7f7f7f; color: #dedede; border: 0; font-weight: bold; }
.row.totals .code, .row.totals .v { border: 0; }
.row.totals .code { padding-left: 3px; }
.g { position: absolute; border-left: 1px dotted #8f8f8f; width: 0; }
.g1 { left: 11px; top: 30px; height: 1130px; }
.g2 { left: 34px; top: 44px; height: 963px; }
.g3 { left: 57px; top: 73px; height: 146px; }
.g4 { left: 57px; top: 1007px; height: 117px; }
.g5 { left: 80px; top: 452px; height: 146px; }
.g6 { left: 103px; top: 481px; height: 88px; }
.g7 { left: 103px; top: 627px; height: 321px; }
.g8 { left: 126px; top: 160px; height: 29px; }
.g9 { left: 126px; top: 306px; height: 58px; }

.vscroll { flex: 1; position: relative; display: flex; flex-direction: column; align-items: center; padding-right: 12px; }
.vs-up { color: #666; font-size: 20px; line-height: 18px; margin-top: 3px; }
.vs-thumb { width: 5px; height: 647px; background: #8c8c8c; margin-top: 26px; }
.wbsbar { height: 32px; display: flex; align-items: flex-start; background: #f0f0f0; position: relative; font-size: 15.500px; }
.wbs-disc { width: 26px; height: 24px; background: #fff; border-bottom: 2px solid #ccc; display: flex; position: relative; }
.wbs-disc::after { content: ""; width: 13px; height: 13px; border-radius: 50%; background: #6d6d6d; margin: 5px 6px; }
.wt { padding: 0 8px; height: 22px; line-height: 20px; background: #fff; border-bottom: 2px solid #333; white-space: nowrap; position: relative; }
.wt::before, .wt::after { content: ""; position: absolute; top: 0; bottom: -2px; width: 8px; }
.wt::before { left: -2px; border-left: 1.500px solid #333; transform: skewX(22deg); }
.wt::after { right: -2px; border-right: 1.500px solid #333; transform: skewX(-22deg); }
.wt-1 { margin-left: 12px; }
.wt-on { font-weight: bold; color: #222; margin-left: -2px; }
.wt-on + .wt { margin-left: -2px; }
.hscroll { margin-left: auto; width: 456px; height: 3px; background: #8c8c8c; margin-top: 12px; margin-right: 129px; }
.vs-down { transform: rotate(-90deg); color: #666; font-size: 20px; margin-right: 18px; line-height: 18px; margin-top: 3px; }

/* status */
.status { flex: 1; background: #f6f6f6; border-top: 8px solid #efefef; display: flex; align-items: center; padding: 0 22px 2px 3px; color: #4a78a6; font-size: 15.300px; }
.st-ready { color: #2f6aa8; font-size: 16px; }
.st-layout { margin-left: auto; }
.st-items { margin-left: 14px; }
.st-minus { width: 9px; height: 3px; background: #2f6fb0; margin-left: 25px; }
.st-slider { width: 136px; height: 4px; background: #e2e2e2; margin-left: 11px; position: relative; }
.st-slider i { position: absolute; left: 65px; top: -9px; width: 7px; height: 21px; background: #2d7dd2; }
.st-plus { margin-left: 14px; font-weight: bold; font-size: 21px; color: #2f6fb0; line-height: 16px; }
.st-pct { margin-left: 3px; }

/* modal */
.modal {
  position: absolute; left: 459px; top: 60px; width: 1667px; height: 1568px;
  background: #fff; display: flex; flex-direction: column;
  border-radius: 6px; box-shadow: 0 0 26px rgba(0,0,0,.32);
  border-top: 1px solid #cfdfec; overflow: hidden; color: #333;
}
.m-title { height: 42px; background: #f5f5f5; display: flex; align-items: center; gap: 9px; padding: 0 15px 0 9px; font-size: 16px; color: #9a9a9a; }
.m-logo { width: 22px; height: 24px; }
.m-close { margin-left: auto; font-size: 18px; color: #aaa; }
.m-tmpl { height: 67px; display: flex; align-items: center; font-size: 15px; padding-left: 4px; }
.t-lbl { width: 76px; }
.t-select { width: 1056px; height: 22px; border: 2px solid #8aa0b8; border-right-color: #c8d4de; border-left-color: #c8d4de; padding-left: 2px; line-height: 18px; font-size: 15px; color: #222; white-space: nowrap; }
.t-arrow { width: 21px; height: 22px; background: #f3f3f3; display: flex; align-items: center; justify-content: center; }
.t-chk { width: 18px; height: 22px; background: #c9c9c9; border-radius: 4px; margin-left: 36px; color: #fff; font-size: 12px; text-align: center; line-height: 22px; }
.t-main { margin-left: 4px; color: #999; font-size: 15px; width: 122px; }
.t-ic { width: 20px; height: 24px; }
.t-ic1 { margin-right: 16px; }
.t-round { width: 21px; height: 24px; border-radius: 50%; background: #a9a9a9; margin-left: 18px; color: #ddd; text-align: center; line-height: 22px; font-weight: bold; }
.t-r1 { margin-left: 36px; }
.t-r2 { border-radius: 5px; }
.t-max { width: 24px; height: 24px; margin-left: 33px; }
.t-maxl { margin-left: 4px; color: #333; font-size: 15px; }
.m-prot { height: 47px; background: #fdf6bd; display: flex; align-items: center; padding-left: 7px; font-size: 15px; }
.p-i { width: 22px; height: 24px; border: 2px solid #4c9ad6; border-radius: 50%; text-align: center; line-height: 20px; color: #2f7fc0; }
.p-b { margin-left: 8px; color: #222; font-size: 15.600px; }
.p-t { margin-left: 6px; color: #444; font-size: 15.300px; }
.p-btn { margin-left: 13px; width: 182px; height: 31px; border: 1px solid #d8d8d8; background: #fff; border-radius: 3px; display: flex; align-items: center; justify-content: center; box-shadow: 0 1px 2px rgba(0,0,0,.2); }
.m-tabs { height: 36px; display: flex; align-items: center; padding-left: 12px; font-size: 15px; border-bottom: 2px solid #cfcfcf; }
.mtab { display: flex; align-items: center; height: 28px; gap: 7px; padding: 0 8px; border-right: 2px solid #d8d8d8; white-space: nowrap; color: #333; }
.mtab-on { width: 148px; border: 2px solid #cfd6dc; font-weight: bold; margin-right: 2px; gap: 8px; font-size: 16.400px; }
.sig { color: #2f9bd8; font-size: 25px; font-weight: normal; line-height: 24px; }
.pi { width: 19px; height: 26px; border: 2px solid #555; color: #2fa0a8; font-size: 14px; text-align: center; line-height: 22px; }
.mt-ic { width: 20px; height: 24px; }

.sheet { display: flex; height: 1268px; padding-left: 5px; }
.sheet-main { width: 1525px; display: flex; flex-direction: column; }
.sheet-rail { width: 15px; background: #003366; }
.s-orange { height: 40px; background: #fdc896; display: grid; grid-template-columns: 217px 276px 347px 1fr; align-items: center; padding-left: 72px; font-family: Lato, sans-serif; font-size: 17.400px; color: #4e4e8a; flex: none; }
.s-navy { height: 13px; background: #003366; flex: none; }
.s-body { display: flex; flex: 1; min-height: 0; }
.ypanel { width: 400px; background: #ffff99; padding-left: 30px; font-family: Lato, sans-serif; color: #6d6d74; flex: none; }
.sec { margin: 0; height: 40px; padding-left: 4px; font: 300 28.200px/39px Lato, sans-serif; color: #72727e; letter-spacing: -.2px; border-bottom: 3px solid #a6d4e6; white-space: nowrap; }
.sec-ind { margin-top: 42px; }
.sec-mark { margin-top: 41px; }
.ihead { height: 40px; padding: 3px 28px 0 4px; display: flex; justify-content: space-between; align-items: center; border-bottom: 3px solid #a6d4e6; font: italic 20px "Liberation Serif", serif; color: #97c92d; letter-spacing: 1.300px; }
.li-row { height: 40.400px; display: flex; justify-content: space-between; align-items: center; padding: 0 5px 0 4px; font-size: 16px; letter-spacing: 1.400px; white-space: nowrap; }
.li-row span:last-child { letter-spacing: .1px; font-size: 17px; }
.li-total { font-weight: bold; color: #46467c; letter-spacing: .8px; height: 40px; }
.li-dark { color: #333; }
.li-profit { font-weight: bold; color: #222; letter-spacing: .3px; height: 36px; }
.dbl { height: 6px; margin: -4px 0 1px 226px; background: #77776c; border-top: 2px solid #66665e; }
.selcell { height: 42px; margin-left: 223px; margin-right: -1px; border: 4px solid #0a0a5e; margin-top: -1px; position: relative; }
.selcell::after { content: ""; position: absolute; right: -5px; bottom: -5px; width: 6px; height: 6px; background: #0a0a5e; }

.summary { flex: 1; padding-left: 133px; min-width: 0; display: flex; flex-direction: column; }
.sec-sum { border-bottom-color: #a9cdf0; }
.s-heads { height: 40px; padding: 3px 0 0 5px; display: grid; grid-template-columns: 273px 221px 1fr; align-items: center; border-bottom: 3px solid #a9cdf0; font: italic 20px "Liberation Serif", serif; color: #97c92d; letter-spacing: .75px; }
.s-vals { height: 44px; display: grid; grid-template-columns: 273px 221px 1fr; align-items: center; padding-left: 4px; font: 300 31px Lato, sans-serif; color: #7a7a96; }
.chart { width: 992px; height: 665px; margin-top: 70px; flex: none; }
.ax { fill: none; stroke: #6f6fa0; stroke-width: 1.500; }
.tick { font: 400 19px "Open Sans", sans-serif; font-feature-settings: "onum" 1; fill: #6e6e9e; text-anchor: end; letter-spacing: .6px; }
.bar1 { fill: #80d23a; }
.bar2 { fill: #cdeeae; }
.clab { font: 15.500px Lato, sans-serif; fill: #6f6f88; text-anchor: middle; letter-spacing: .8px; }
.selling { margin-left: 272px; width: 428px; height: 43px; margin-top: 68px; background: #ffff99; display: flex; align-items: center; gap: 70px; padding-left: 6px; font: bold 26px "Open Sans", sans-serif; color: #3d3d8c; letter-spacing: -.1px; flex: none; white-space: nowrap; }
.loc { margin-top: 79px; width: 494px; display: grid; grid-template-columns: 272px 222px; grid-auto-rows: 40.400px; font: 600 18px "Open Sans", sans-serif; color: #3e3e8a; letter-spacing: -.2px; }
.lc { background: #fdc896; border: 1px solid #8e8a80; border-top-width: 2px; padding: 3px 4px; }
.lc-app { padding: 10px 4px; color: #4f4f9e; }
.lc-val { border: 1px solid #9a9a9a; border-bottom-width: 2px; text-align: right; padding: 2px 3px; color: #f47b20; font-weight: 700; }

.sheettabs { height: 29px; background: #f1f1f1; border-bottom: 2px solid #ddd; display: flex; align-items: stretch; padding-left: 2px; font-size: 17px; color: #333; overflow: hidden; }
.st-nav { width: 22px; flex: none; display: flex; align-items: center; justify-content: center; font-size: 15px; color: #222; }
.stab { flex: none; padding: 0 7.500px; display: flex; align-items: center; position: relative; white-space: nowrap; }
.stab::after { content: ""; position: absolute; right: 0; top: 0; bottom: 0; border-right: 1px solid #999; transform: skewX(-24deg); }
.stab-low { padding: 0 15.500px; letter-spacing: .3px; }
.stab-on { background: #0b6fd0; color: #0a1f5c; font-weight: bold; margin-left: 6px; margin-right: -9px; padding: 0 25px 0 10px; clip-path: polygon(0 0, 100% 0, calc(100% - 14px) 100%, 0 100%); font-size: 17px; letter-spacing: -.4px; }
.stab-on::after { display: none; }
.m-foot { flex: 1; display: flex; align-items: center; padding: 12px 12px 0 12px; font-size: 15px; }
.f-save { width: 34px; height: 34px; margin-top: 10px; }
.f-savel { margin-left: 4px; color: #aaa; font-size: 15.200px; margin-top: 10px; }
.f-chk { width: 17px; height: 20px; border-radius: 3px; background: #0b5cb8; color: #fff; font-size: 12px; text-align: center; line-height: 20px; margin-left: auto; }
.f-lis { margin-left: 5px; color: #333; font-size: 15.600px; }
.f-btn { height: 30px; border: 1px solid #d8d8d8; border-radius: 3px; background: #fff; box-shadow: 0 1px 2px rgba(0,0,0,.2); display: flex; align-items: center; justify-content: center; }
.f-b1 { width: 79px; margin-left: 18px; }
.f-b2 { width: 164px; margin-left: 12px; }
.f-b3 { width: 187px; margin-left: 12px; }
```
